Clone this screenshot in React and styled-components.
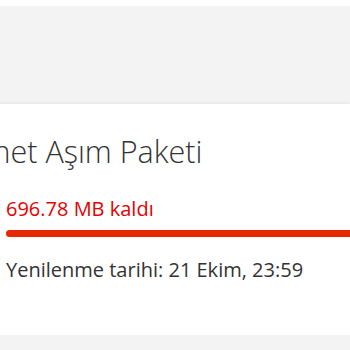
import React from "react";
import styled, { createGlobalStyle } from "styled-components";

const Global = createGlobalStyle`
    html, body {
        margin: 0;
        padding: 0;
        background: #ffffff;
        overflow: hidden;
    }
    body {
        font-family: "Open Sans", "Liberation Sans", sans-serif;
    }
`;

const Page = styled.div`
    width: 350px;
    height: 350px;
    display: flex;
    flex-direction: column;
    padding-top: 6px;
    box-sizing: border-box;
    overflow: hidden;
`;

const GrayPanel = styled.div`
    height: 98px;
    background-color: #f3f3f3;
    flex-shrink: 0;
`;

const Card = styled.div`
    height: 231px;
    flex-shrink: 0;
    background: #ffffff;
    box-shadow: 0 -1px 3px rgba(0, 0, 0, 0.06);
    padding: 0 0 0 6px;
    box-sizing: border-box;
`;

const Title = styled.h2`
    margin: 0;
    padding-top: 29px;
    margin-left: -78px;
    font-weight: 300;
    font-size: 30.5px;
    line-height: 36px;
    color: #333333;
    white-space: nowrap;
`;

const Remaining = styled.div`
    margin-top: 28px;
    font-size: 20px;
    line-height: 24px;
    color: #e60000;
`;

const Track = styled.div`
    margin-top: 9px;
    height: 7px;
    margin-right: -20px;
    border-radius: 4px;
    background-color: #e62800;
`;

const Renewal = styled.div`
    margin-top: 20px;
    font-size: 20px;
    line-height: 26px;
    color: #333333;
`;

const BottomPanel = styled.div`
    flex: 1;
    background-color: #f3f3f3;
`;

const App = () => {
    return (
        <>
            <Global />
            <Page>
                <GrayPanel />
                <Card>
                    <Title>İnternet Aşım Paketi</Title>
                    <Remaining>696.78 MB kaldı</Remaining>
                    <Track />
                    <Renewal>Yenilenme tarihi: 21 Ekim, 23:59</Renewal>
                </Card>
                <BottomPanel />
            </Page>
        </>
    );
};

export default App;
